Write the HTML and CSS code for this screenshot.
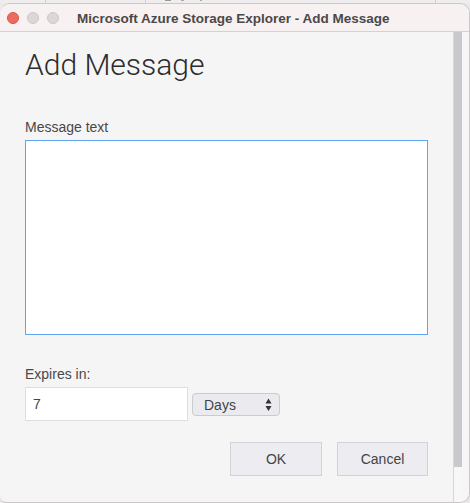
FILE: index.html
```html
<!DOCTYPE html>
<html>
<head>
<meta charset="utf-8">
<link rel="stylesheet" href="styles.css">
<title>Add Message</title>
</head>
<body>
<div class="backdrop"></div>
<div class="window">
  <div class="titlebar">
    <div class="lights">
      <span class="light red"></span>
      <span class="light gray"></span>
      <span class="light gray"></span>
    </div>
    <div class="title">Microsoft Azure Storage Explorer - Add Message</div>
  </div>
  <div class="body">
    <div class="main">
      <h1 class="heading">Add Message</h1>
      <label class="label">Message text</label>
      <textarea class="textarea"></textarea>
      <label class="label label-expires">Expires in:</label>
      <div class="expires-row">
        <input class="num-input" type="text" value="7">
        <div class="select">
          <span class="select-text">Days</span>
          <svg class="select-arrows" width="7" height="14" viewBox="0 0 7 14">
            <path d="M3.5 0.5 L6.5 5.5 L0.5 5.5 Z" fill="#333"/>
            <path d="M0.5 8 L6.5 8 L3.5 13 Z" fill="#333"/>
          </svg>
        </div>
      </div>
      <div class="buttons">
        <button class="btn">OK</button>
        <button class="btn">Cancel</button>
      </div>
    </div>
    <div class="scroll">
      <div class="scroll-track"></div>
    </div>
    <div class="gutter"></div>
  </div>
</div>
</body>
</html>
```
FILE: styles.css
```css
* { box-sizing: border-box; }
html, body {
  margin: 0;
  padding: 0;
}
body {
  width: 470px;
  height: 503px;
  overflow: hidden;
  background: #ebe9e9;
  font-family: "Liberation Sans", Arial, sans-serif;
}
.backdrop {
  height: 3px;
  background:
    linear-gradient(#9a9a9a, #9a9a9a) 165px 0 / 6px 1px no-repeat,
    linear-gradient(#a8a8a8, #a8a8a8) 181px 0 / 3px 1px no-repeat,
    linear-gradient(#a8a8a8, #a8a8a8) 200px 0 / 2px 1px no-repeat,
    linear-gradient(#d2d0d0, #d2d0d0) 45px 0 / 1px 3px no-repeat,
    linear-gradient(#d2d0d0, #d2d0d0) 145px 0 / 1px 3px no-repeat,
    linear-gradient(#d2d0d0, #d2d0d0) 435px 0 / 1px 3px no-repeat,
    #efeded;
}
.window {
  width: 470px;
  height: 500px;
  display: flex;
  flex-direction: column;
  border: 1px solid #c9c7c7;
  border-left: none;
  border-radius: 10px 10px 10px 6px;
  overflow: hidden;
  background: #f5f5f5;
}
.titlebar {
  height: 28px;
  flex: none;
  display: flex;
  align-items: center;
  background: #f7f1f1;
  border-bottom: 1px solid #d3d1d1;
}
.lights {
  display: flex;
  gap: 8px;
  padding-left: 7px;
  padding-top: 1px;
}
.light {
  width: 12px;
  height: 12px;
  border-radius: 50%;
  display: block;
}
.light.red {
  background: #ee6b60;
  border: 1px solid #d8554b;
}
.light.gray {
  background: #dcd8d8;
  border: 1px solid #cbc7c7;
}
.title {
  margin-left: 18px;
  font-size: 13.5px;
  font-weight: bold;
  color: #4b4848;
  padding-top: 1px;
}
.body {
  flex: 1;
  display: flex;
  min-height: 0;
}
.main {
  flex: 1;
  display: flex;
  flex-direction: column;
  padding: 16px 25px 0 25px;
}
.heading {
  margin: 0;
  font-family: Roboto, "Liberation Sans", sans-serif;
  font-weight: 300;
  font-size: 30px;
  line-height: 34px;
  color: #2c2c2c;
}
.label {
  display: block;
  font-size: 14px;
  line-height: 16px;
  color: #484848;
  margin-top: 37px;
  margin-bottom: 5px;
}
.label-expires {
  margin-top: 31px;
}
.textarea {
  display: block;
  width: 403px;
  height: 195px;
  margin: 0;
  padding: 0;
  border: 1px solid #5fa4f3;
  background: #fff;
  resize: none;
  outline: none;
  font-family: inherit;
}
.expires-row {
  display: flex;
  align-items: center;
  gap: 4px;
}
.num-input {
  width: 163px;
  height: 34px;
  margin: 0;
  padding: 0 7px;
  border: 1px solid #dedede;
  background: #fff;
  font-family: "Liberation Sans", Arial, sans-serif;
  font-size: 14px;
  color: #444;
  outline: none;
}
.select {
  width: 88px;
  height: 23px;
  display: flex;
  align-items: center;
  justify-content: space-between;
  padding: 0 7px 0 11px;
  background: #ebebef;
  border: 1px solid #cbcbcf;
  border-radius: 4px;
  margin-top: 1px;
}
.select-text {
  font-size: 14px;
  color: #444;
}
.select-arrows {
  display: block;
}
.buttons {
  display: flex;
  justify-content: flex-end;
  gap: 15px;
  margin-top: 21px;
}
.btn {
  width: 92px;
  height: 34px;
  margin: 0;
  padding: 0;
  background: #ededf1;
  border: 1px solid #d2d2d6;
  border-radius: 0;
  font-family: "Liberation Sans", Arial, sans-serif;
  font-size: 14px;
  color: #444;
}
.btn + .btn {
  width: 91px;
}
.scroll {
  width: 9px;
  flex: none;
  border-left: 1px solid #d8d8d8;
  background: #f7f7f7;
}
.scroll-track {
  height: 435px;
  background: #c9c9cd;
}
.gutter {
  width: 7px;
  flex: none;
  background: #f6f6f6;
}
```
